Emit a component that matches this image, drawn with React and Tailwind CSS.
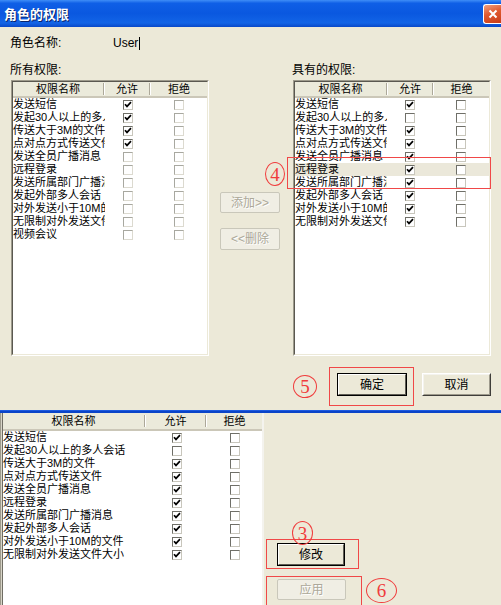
import React from "react";

const ALL = [
  "发送短信",
  "发起30人以上的多人会话",
  "传送大于3M的文件",
  "点对点方式传送文件",
  "发送全员广播消息",
  "远程登录",
  "发送所属部门广播消息",
  "发起外部多人会话",
  "对外发送小于10M的文件",
  "无限制对外发送文件大小",
  "视频会议",
];
const HAVE = ALL.slice(0, 10);

function Cb({ checked, dim }) {
  return (
    <span
      className={
        dim
          ? "w-[10px] h-[10px] bg-white border border-t-[#a8a8a0] border-l-[#a8a8a0] border-r-[#dcdad0] border-b-[#dcdad0] flex items-center justify-center"
          : "w-[10px] h-[10px] bg-white border border-t-[#6f6f68] border-l-[#6f6f68] border-r-[#c8c6bc] border-b-[#c8c6bc] flex items-center justify-center"
      }
    >
      {checked && (
        <svg width="8" height="8" viewBox="0 0 8 8">
          <path d="M1 3.2 L3 5.4 L7 1.2" stroke="#000" strokeWidth="1.7" fill="none" />
        </svg>
      )}
    </span>
  );
}

function HeadSep() {
  return <span className="h-[12px] w-[2px] border-l border-[#aca899] border-r border-r-white shrink-0" />;
}

function Header({ w1, w2, w3, h }) {
  return (
    <div className={h === 18 ? "h-[18px] flex items-center bg-[#ebeadb] border-b-2 border-[#cbc7b8] shrink-0" : "h-[16px] flex items-center bg-[#ebeadb] border-b-2 border-[#cbc7b8] shrink-0"}>
      <span className="text-center" style={{ width: w1 - 2 }}>权限名称</span>
      <HeadSep />
      <span className="text-center" style={{ width: w2 - 2 }}>允许</span>
      <HeadSep />
      <span className="text-center flex-1">拒绝</span>
    </div>
  );
}

function Row({ name, allow, dim, w1, w2, w3, hl }) {
  return (
    <div className={hl ? "h-[13px] flex items-center bg-[#ebe8da]" : "h-[13px] flex items-center"}>
      <span className="overflow-hidden whitespace-nowrap leading-[13px]" style={{ width: w1 }}>{name}</span>
      <span className="flex justify-center" style={{ width: w2 }}>
        <Cb checked={allow} dim={dim && !allow} />
      </span>
      <span className="flex justify-center" style={{ width: w3 }}>
        <Cb checked={false} dim={dim} />
      </span>
    </div>
  );
}

function ListBox({ children }) {
  return (
    <div className="h-[276px] border border-t-[#9d9a8c] border-l-[#9d9a8c] border-r-white border-b-white">
      <div className="h-full bg-white border border-t-[#5a5850] border-l-[#5a5850] border-r-[#ece9d8] border-b-[#ece9d8] flex flex-col overflow-hidden">
        {children}
      </div>
    </div>
  );
}

function DisBtn({ children, w, h }) {
  return (
    <div
      className="border border-[#c9c7ba] rounded-[2px] bg-[#f0eee4] flex items-center justify-center text-[#aca899] text-[12px] [text-shadow:1px_1px_0_#fff]"
      style={{ width: w, height: h }}
    >
      {children}
    </div>
  );
}

function DefBtn({ children, w, h }) {
  return (
    <div className="border border-black bg-[#ece9d8]" style={{ width: w, height: h }}>
      <div className="h-full border border-t-white border-l-white border-r-[#5e5c54] border-b-[#5e5c54] flex items-center justify-center text-[12px] text-black">
        {children}
      </div>
    </div>
  );
}

function Btn({ children, w, h }) {
  return (
    <div className="border border-t-white border-l-white border-r-[#3f3e3a] border-b-[#3f3e3a] bg-[#ece9d8]" style={{ width: w, height: h }}>
      <div className="h-full border border-t-[#f4f3ee] border-l-[#f4f3ee] border-r-[#9d9a8c] border-b-[#9d9a8c] flex items-center justify-center text-[12px] text-black">
        {children}
      </div>
    </div>
  );
}

function Circle({ n, l, t, w, h }) {
  return (
    <div
      className="absolute border border-[#f03c3c] rounded-[50%] flex items-center justify-center text-[#f03c3c] font-['Liberation_Serif',serif] text-[19px] leading-none"
      style={{ left: l, top: t, width: w, height: h }}
    >
      {n}
    </div>
  );
}

function RedBox({ l, t, w, h }) {
  return <div className="absolute border border-[#f04848]" style={{ left: l, top: t, width: w, height: h }} />;
}

export default function App() {
  return (
    <div className="relative w-[501px] h-[605px] overflow-hidden bg-[#ece9d8] text-[11px] text-black font-['Liberation_Sans','Noto_Sans_CJK_SC',sans-serif]">
      {/* title bar */}
      <div className="h-[27px] flex items-center bg-[linear-gradient(180deg,#3f8ef7_0%,#0f5fe6_12%,#0a58e0_50%,#1264e6_85%,#0848c8_100%)]">
        <span className="pl-[4px] text-white font-bold text-[13px] [text-shadow:1px_1px_0_#0a246a] font-['Noto_Sans_CJK_SC',sans-serif]">角色的权限</span>
        <div className="ml-auto self-start mt-[4px] w-[18px] h-[20px] rounded-l-[3px] border border-r-0 border-white bg-[linear-gradient(160deg,#f0a080_0%,#e05a30_45%,#c83c18_100%)] flex items-center justify-center">
          <svg width="10" height="10" viewBox="0 0 10 10">
            <path d="M1.5 1.5 L8.5 8.5 M8.5 1.5 L1.5 8.5" stroke="#fff" strokeWidth="2" />
          </svg>
        </div>
      </div>

      {/* dialog body */}
      <div className="h-[383px] flex flex-col pt-[9px]">
        <div className="h-[14px] flex items-center pl-[10px]">
          <span className="w-[103px] text-[12px]">角色名称:</span>
          <span className="text-[12px]">User</span>
          <span className="w-px h-[13px] bg-black ml-[1px]" />
        </div>

        <div className="mt-[13px] flex pl-[11px]">
          {/* left column */}
          <div className="w-[198px] flex flex-col">
            <div className="h-[14px] flex items-center text-[12px] -ml-px">所有权限:</div>
            <div className="mt-[3px]">
              <ListBox>
                <Header w1={92} w2={46} w3={56} />
                {ALL.map((n, i) => (
                  <Row key={i} name={n} allow={i < 4} dim w1={92} w2={46} w3={56} />
                ))}
              </ListBox>
            </div>
          </div>

          {/* middle buttons */}
          <div className="w-[84px] flex flex-col pl-[11px] pt-[129px] gap-[15px]">
            <DisBtn w={60} h={21}>添加&gt;&gt;</DisBtn>
            <DisBtn w={60} h={22}>&lt;&lt;删除</DisBtn>
          </div>

          {/* right column */}
          <div className="w-[198px] flex flex-col">
            <div className="h-[14px] flex items-center text-[12px] -ml-px">具有的权限:</div>
            <div className="mt-[3px]">
              <ListBox>
                <Header w1={93} w2={46} w3={57} />
                {HAVE.map((n, i) => (
                  <Row key={i} name={n} allow={i !== 1} w1={93} w2={46} w3={57} hl={i === 5} />
                ))}
              </ListBox>
            </div>
          </div>
        </div>

        <div className="mt-[17px] flex justify-end gap-[15px] pr-[10px]">
          <DefBtn w={70} h={23}>确定</DefBtn>
          <Btn w={69} h={23}>取消</Btn>
        </div>
      </div>

      {/* blue separator */}
      <div className="h-[3px] bg-[#0a44c8] border-t border-[#1d5ae0]" />

      {/* bottom window */}
      <div className="h-[192px] flex">
        <div className="w-[264px] flex border-r-2 border-[#f4f3ee]">
          <div className="w-[3px] border-l border-[#9d9a8c] bg-[#d8d5c8] border-r border-r-[#6f6d64]" />
          <div className="flex-1 bg-white flex flex-col">
            <Header w1={143} w2={61} w3={55} h={18} />
            {HAVE.map((n, i) => (
              <Row key={i} name={n} allow={i !== 1} w1={143} w2={61} w3={55} />
            ))}
          </div>
        </div>
        <div className="flex-1 flex flex-col pl-[13px] pt-[130px] gap-[13px]">
          <DefBtn w={68} h={23}>修改</DefBtn>
          <DisBtn w={69} h={21}>应用</DisBtn>
        </div>
      </div>

      {/* annotations */}
      <RedBox l={287} t={157} w={204} h={32} />
      <Circle n="4" l={265} t={162} w={20} h={24} />
      <RedBox l={329} t={367} w={85} h={39} />
      <Circle n="5" l={293} t={375} w={24} h={23} />
      <RedBox l={266} t={539} w={93} h={30} />
      <Circle n="3" l={292} t={521} w={21} h={24} />
      <RedBox l={266} t={576} w={96} h={32} />
      <Circle n="6" l={366} t={578} w={31} h={25} />
    </div>
  );
}
